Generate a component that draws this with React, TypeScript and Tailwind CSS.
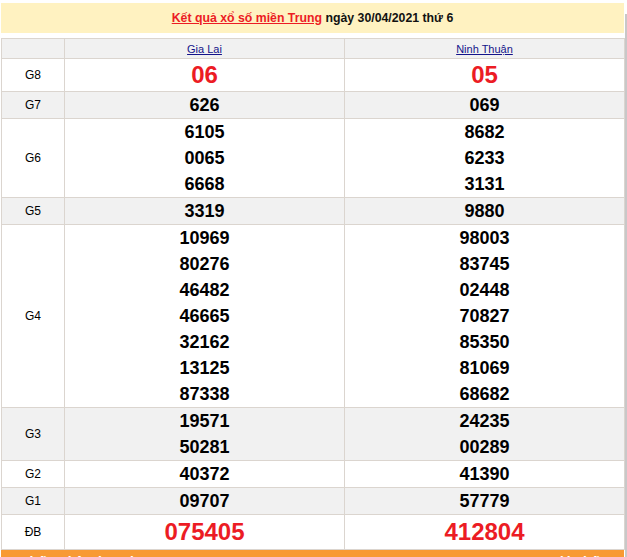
const rows: { label: string; gray: boolean; big?: boolean; h?: string; a: string[]; b: string[] }[] = [
  { label: "G8", gray: false, big: true, h: "h-[33px]", a: ["06"], b: ["05"] },
  { label: "G7", gray: true, a: ["626"], b: ["069"] },
  { label: "G6", gray: false, a: ["6105", "0065", "6668"], b: ["8682", "6233", "3131"] },
  { label: "G5", gray: true, a: ["3319"], b: ["9880"] },
  {
    label: "G4",
    gray: false,
    a: ["10969", "80276", "46482", "46665", "32162", "13125", "87338"],
    b: ["98003", "83745", "02448", "70827", "85350", "81069", "68682"],
  },
  { label: "G3", gray: true, a: ["19571", "50281"], b: ["24235", "00289"] },
  { label: "G2", gray: false, a: ["40372"], b: ["41390"] },
  { label: "G1", gray: true, a: ["09707"], b: ["57779"] },
  { label: "ĐB", gray: false, big: true, h: "h-[35px]", a: ["075405"], b: ["412804"] },
];

const cell = "border border-[#dbd5cf] text-center align-middle p-0";

function Numbers({ items, big }: { items: string[]; big?: boolean }) {
  return (
    <div className="flex flex-col items-center">
      {items.map((n, i) =>
        big ? (
          <span key={i} className="text-[24px] leading-[32px] font-bold text-[#ec1c24]">
            {n}
          </span>
        ) : (
          <span key={i} className="text-[18px] leading-[26px] font-bold text-black">
            {n}
          </span>
        )
      )}
    </div>
  );
}

export default function App() {
  return (
    <div className="flex w-[627px] h-[557px] overflow-hidden bg-white font-['Liberation_Sans',Arial,sans-serif]">
      <div className="w-[625px] shrink-0 flex flex-col pl-[1px]">
        <div className="shrink-0 mt-[3px] h-[30px] w-[623px] bg-[#fff2c1] flex items-center justify-center text-[12.3px] font-bold text-[#111]">
          <a href="#" className="text-[#ec1c24] underline">
            Kết quả xổ số miền Trung
          </a>
          <span>&nbsp;ngày 30/04/2021 thứ 6</span>
        </div>
        <table className="shrink-0 mt-[5px] w-[623px] border-collapse table-fixed">
          <colgroup>
            <col className="w-[63px]" />
            <col className="w-[280px]" />
            <col className="w-[280px]" />
          </colgroup>
          <tbody>
            <tr className="bg-[#f1f1f1] h-[20px] text-[11px] leading-[18px]">
              <td className={cell}></td>
              <td className={cell}>
                <a href="#" className="text-[#14148a] underline">
                  Gia Lai
                </a>
              </td>
              <td className={cell}>
                <a href="#" className="text-[#14148a] underline">
                  Ninh Thuận
                </a>
              </td>
            </tr>
            {rows.map((r) => (
              <tr
                key={r.label}
                className={(r.gray ? "bg-[#f1f1f1] " : "bg-white ") + "text-[12px] leading-[16px] " + (r.h ?? "")}
              >
                <td className={cell + " text-black"}>{r.label}</td>
                <td className={cell}>
                  <Numbers items={r.a} big={r.big} />
                </td>
                <td className={cell}>
                  <Numbers items={r.b} big={r.big} />
                </td>
              </tr>
            ))}
          </tbody>
        </table>
        <div className="shrink-0 w-[623px] h-[24px] bg-[#f89a34] flex justify-between px-[20px] pt-[4px] text-[14px] leading-[16px] font-bold text-white">
          <span>Thống kê Gia Lai</span>
          <span>Mới nhất</span>
        </div>
      </div>
      <div className="w-[2px] mt-[14px] bg-[#c8c8c8]"></div>
    </div>
  );
}
